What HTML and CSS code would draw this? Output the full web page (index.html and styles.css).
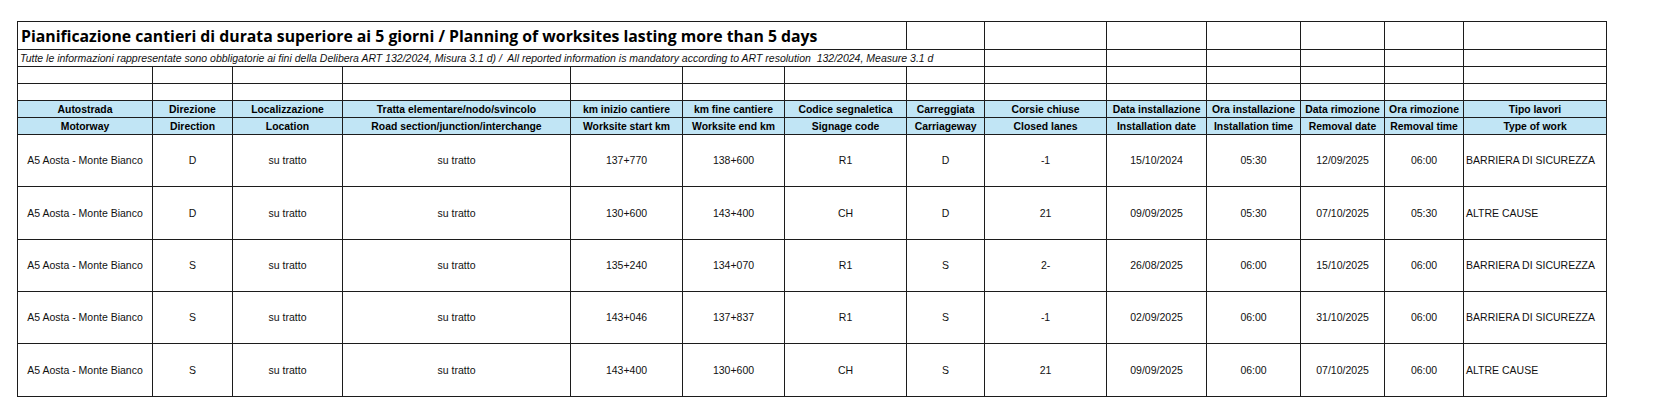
FILE: index.html
```html
<!DOCTYPE html>
<html lang="it">
<head>
<meta charset="utf-8">
<title>Pianificazione cantieri</title>
<link rel="stylesheet" href="styles.css">
</head>
<body>
<table class="sheet">
  <colgroup>
    <col class="c1"><col class="c2"><col class="c3"><col class="c4"><col class="c5"><col class="c6"><col class="c7">
    <col class="c8"><col class="c9"><col class="c10"><col class="c11"><col class="c12"><col class="c13"><col class="c14">
  </colgroup>
  <tbody>
    <tr class="r-title">
      <td colspan="7" class="title">Pianificazione cantieri di durata superiore ai 5 giorni / Planning of worksites lasting more than 5 days</td>
      <td></td><td></td><td></td><td></td><td></td><td></td><td></td>
    </tr>
    <tr class="r-sub">
      <td colspan="8" class="subtitle">Tutte le informazioni rappresentate sono obbligatorie ai fini della Delibera ART 132/2024, Misura 3.1 d) /&nbsp; All reported information is mandatory according to ART resolution&nbsp; 132/2024, Measure 3.1 d</td>
      <td></td><td></td><td></td><td></td><td></td><td></td>
    </tr>
    <tr class="r-blank"><td></td><td></td><td></td><td></td><td></td><td></td><td></td><td></td><td></td><td></td><td></td><td></td><td></td><td></td></tr>
    <tr class="r-blank"><td></td><td></td><td></td><td></td><td></td><td></td><td></td><td></td><td></td><td></td><td></td><td></td><td></td><td></td></tr>
    <tr class="r-head">
      <th>Autostrada</th><th>Direzione</th><th>Localizzazione</th><th>Tratta elementare/nodo/svincolo</th><th>km inizio cantiere</th><th>km fine cantiere</th><th>Codice segnaletica</th><th>Carreggiata</th><th>Corsie chiuse</th><th>Data installazione</th><th>Ora installazione</th><th>Data rimozione</th><th>Ora rimozione</th><th>Tipo lavori</th>
    </tr>
    <tr class="r-head">
      <th>Motorway</th><th>Direction</th><th>Location</th><th>Road section/junction/interchange</th><th>Worksite start km</th><th>Worksite end km</th><th>Signage code</th><th>Carriageway</th><th>Closed lanes</th><th>Installation date</th><th>Installation time</th><th>Removal date</th><th>Removal time</th><th>Type of work</th>
    </tr>
    <tr class="r-data h52">
      <td>A5 Aosta - Monte Bianco</td><td>D</td><td>su tratto</td><td>su tratto</td><td>137+770</td><td>138+600</td><td>R1</td><td>D</td><td>-1</td><td>15/10/2024</td><td>05:30</td><td>12/09/2025</td><td>06:00</td><td class="left">BARRIERA DI SICUREZZA</td>
    </tr>
    <tr class="r-data h53">
      <td>A5 Aosta - Monte Bianco</td><td>D</td><td>su tratto</td><td>su tratto</td><td>130+600</td><td>143+400</td><td>CH</td><td>D</td><td>21</td><td>09/09/2025</td><td>05:30</td><td>07/10/2025</td><td>05:30</td><td class="left">ALTRE CAUSE</td>
    </tr>
    <tr class="r-data h52">
      <td>A5 Aosta - Monte Bianco</td><td>S</td><td>su tratto</td><td>su tratto</td><td>135+240</td><td>134+070</td><td>R1</td><td>S</td><td>2-</td><td>26/08/2025</td><td>06:00</td><td>15/10/2025</td><td>06:00</td><td class="left">BARRIERA DI SICUREZZA</td>
    </tr>
    <tr class="r-data h52">
      <td>A5 Aosta - Monte Bianco</td><td>S</td><td>su tratto</td><td>su tratto</td><td>143+046</td><td>137+837</td><td>R1</td><td>S</td><td>-1</td><td>02/09/2025</td><td>06:00</td><td>31/10/2025</td><td>06:00</td><td class="left">BARRIERA DI SICUREZZA</td>
    </tr>
    <tr class="r-data h53">
      <td>A5 Aosta - Monte Bianco</td><td>S</td><td>su tratto</td><td>su tratto</td><td>143+400</td><td>130+600</td><td>CH</td><td>S</td><td>21</td><td>09/09/2025</td><td>06:00</td><td>07/10/2025</td><td>06:00</td><td class="left">ALTRE CAUSE</td>
    </tr>
  </tbody>
</table>
</body>
</html>
```
FILE: styles.css
```css
html, body {
  margin: 0;
  padding: 0;
  background: #ffffff;
}

body {
  font-family: "Liberation Sans", Arial, sans-serif;
  color: #000000;
}

.sheet {
  margin: 21px 0 0 17px;
  border-collapse: collapse;
  table-layout: fixed;
  width: 1590px;
}

.c1 { width: 135px; }
.c2 { width: 80px; }
.c3 { width: 110px; }
.c4 { width: 228px; }
.c5 { width: 112px; }
.c6 { width: 102px; }
.c7 { width: 122px; }
.c8 { width: 78px; }
.c9 { width: 122px; }
.c10 { width: 100px; }
.c11 { width: 94px; }
.c12 { width: 84px; }
.c13 { width: 79px; }
.c14 { width: 143px; }

.sheet td,
.sheet th {
  border: 1px solid #1c1c1c;
  padding: 0 2px;
  font-size: 10.5px;
  line-height: 11px;
  white-space: nowrap;
  overflow: hidden;
  text-align: center;
  vertical-align: middle;
  color: #111111;
}

.r-title { height: 28px; }
.r-sub { height: 17px; }
.r-blank { height: 17px; }
.r-head { height: 17px; }
.h52 { height: 52px; }
.h53 { height: 53px; }

.sheet .title {
  font-family: "Open Sans", "Liberation Sans", sans-serif;
  font-weight: 700;
  font-size: 15.8px;
  line-height: 19px;
  text-align: left;
  vertical-align: bottom;
  padding: 0 2px 3px 3px;
  color: #000000;
}

.sheet .subtitle {
  font-style: italic;
  font-size: 10.5px;
  text-align: left;
  vertical-align: bottom;
  padding: 0 2px 2px 2px;
}

.r-head th {
  background: #c1e5f5;
  font-weight: 700;
  font-size: 10.4px;
  vertical-align: bottom;
  padding-bottom: 2px;
  color: #000000;
}

.sheet td.left {
  text-align: left;
  padding-left: 2px;
}
```
